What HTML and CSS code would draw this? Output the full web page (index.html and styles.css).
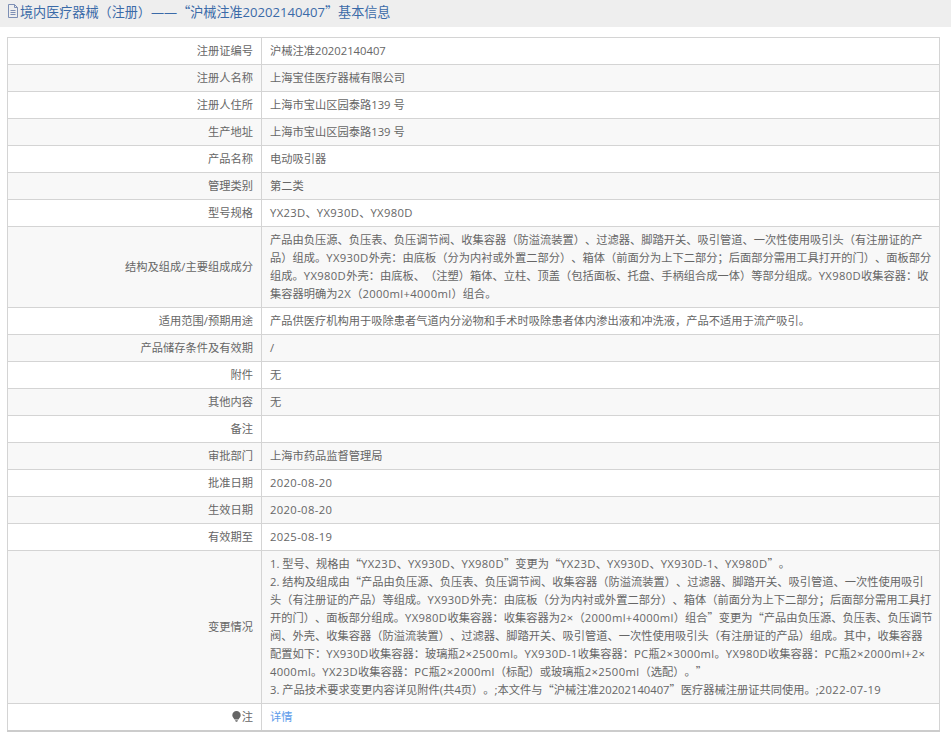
FILE: index.html
```html
<!DOCTYPE html>
<html lang="zh-CN">
<head>
    <meta charset="UTF-8">
    <title>基本信息</title>
    <link rel="stylesheet" href="styles.css">
</head>
<body>
    <div class="title-bar">
        <svg class="doc-icon" width="12" height="14" viewBox="0 0 12 14"><path d="M1.500 .5h6l3 3v10h-9z M7.500 .5v3h3 M3.500 6.500h5 M3.500 8.500h5 M3.500 10.500h5" fill="none" stroke="#7d8fb5"/></svg>
        <span>境内医疗器械（注册）——<span class="q">“</span>沪械注准20202140407<span class="q">”</span>基本信息</span>
    </div>
    <table class="info-table">
        <tr><td class="label">注册证编号</td><td>沪械注准20202140407</td></tr>
        <tr><td class="label">注册人名称</td><td>上海宝佳医疗器械有限公司</td></tr>
        <tr><td class="label">注册人住所</td><td>上海市宝山区园泰路139 号</td></tr>
        <tr><td class="label">生产地址</td><td>上海市宝山区园泰路139 号</td></tr>
        <tr><td class="label">产品名称</td><td>电动吸引器</td></tr>
        <tr><td class="label">管理类别</td><td>第二类</td></tr>
        <tr><td class="label">型号规格</td><td><span class="en">YX23D</span>、<span class="en">YX930D</span>、<span class="en">YX980D</span></td></tr>
        <tr><td class="label">结构及组成/主要组成成分</td><td>产品由负压源、负压表、负压调节阀、收集容器（防溢流装置）、过滤器、脚踏开关、吸引管道、一次性使用吸引头（有注册证的产<br>品）组成。<span class="en">YX930D</span>外壳<span class="p">：</span>由底板（分为内衬或外置二部分）、箱体（前面分为上下二部分<span class="p">；</span>后面部分需用工具打开的门）、面板部分<br>组成。<span class="en">YX980D</span>外壳<span class="p">：</span>由底板、（注塑）箱体、立柱、顶盖（包括面板、托盘、手柄组合成一体）等部分组成。<span class="en">YX980D</span>收集容器<span class="p">：</span>收<br>集容器明确为<span class="en">2X</span>（<span class="en">2000ml+4000ml</span>）组合。</td></tr>
        <tr><td class="label">适用范围/预期用途</td><td>产品供医疗机构用于吸除患者气道内分泌物和手术时吸除患者体内渗出液和冲洗液<span class="p">，</span>产品不适用于流产吸引。</td></tr>
        <tr><td class="label">产品储存条件及有效期</td><td>/</td></tr>
        <tr><td class="label">附件</td><td>无</td></tr>
        <tr><td class="label">其他内容</td><td>无</td></tr>
        <tr><td class="label">备注</td><td></td></tr>
        <tr><td class="label">审批部门</td><td>上海市药品监督管理局</td></tr>
        <tr><td class="label">批准日期</td><td><span class="en">2020-08-20</span></td></tr>
        <tr><td class="label">生效日期</td><td><span class="en">2020-08-20</span></td></tr>
        <tr><td class="label">有效期至</td><td><span class="en">2025-08-19</span></td></tr>
        <tr><td class="label">变更情况</td><td>1. 型号、规格由<span class="q">“</span><span class="en">YX23D</span>、<span class="en">YX930D</span>、<span class="en">YX980D</span><span class="q">”</span>变更为<span class="q">“</span><span class="en">YX23D</span>、<span class="en">YX930D</span>、<span class="en">YX930D-1</span>、<span class="en">YX980D</span><span class="q">”</span>。<br>2. 结构及组成由<span class="q">“</span>产品由负压源、负压表、负压调节阀、收集容器（防溢流装置）、过滤器、脚踏开关、吸引管道、一次性使用吸引<br>头（有注册证的产品）等组成。<span class="en">YX930D</span>外壳<span class="p">：</span>由底板（分为内衬或外置二部分）、箱体（前面分为上下二部分<span class="p">；</span>后面部分需用工具打<br>开的门）、面板部分组成。<span class="en">YX980D</span>收集容器<span class="p">：</span>收集容器为<span class="en">2×</span>（<span class="en">2000ml+4000ml</span>）组合<span class="q">”</span>变更为<span class="q">“</span>产品由负压源、负压表、负压调节<br>阀、外壳、收集容器（防溢流装置）、过滤器、脚踏开关、吸引管道、一次性使用吸引头（有注册证的产品）组成。其中<span class="p">，</span>收集容器<br>配置如下<span class="p">：</span><span class="en">YX930D</span>收集容器<span class="p">：</span>玻璃瓶<span class="en">2×2500ml</span>。<span class="en">YX930D-1</span>收集容器<span class="p">：</span><span class="en">PC</span>瓶<span class="en">2×3000ml</span>。<span class="en">YX980D</span>收集容器<span class="p">：</span><span class="en">PC</span>瓶<span class="en">2×2000ml+2×</span><br><span class="en">4000ml</span>。<span class="en">YX23D</span>收集容器<span class="p">：</span><span class="en">PC</span>瓶<span class="en">2×2000ml</span>（标配）或玻璃瓶<span class="en">2×2500ml</span>（选配）。<span class="q">”</span><br>3. 产品技术要求变更内容详见附件(共4页）。;本文件与<span class="q">“</span>沪械注准20202140407<span class="q">”</span>医疗器械注册证共同使用。;<span class="en">2022-07-19</span></td></tr>
        <tr><td class="label"><svg class="tip-icon" width="9" height="11" viewBox="0 0 9 11"><path d="M4.500 0a4.200 4.200 0 0 1 4.200 4.200c0 2-1.500 2.800-2.200 4.300h-4c-.7-1.500-2.200-2.300-2.200-4.300a4.200 4.200 0 0 1 4.200-4.200zM3 9.300h3l-.8 1.500h-1.400z" fill="#666"/></svg>注</td><td><a href="#" class="detail-link">详情</a></td></tr>
    </table>
</body>
</html>
```

FILE: styles.css
```css
body {
    margin: 0;
    background-color: #fff;
    font-family: "Open Sans", "Noto Sans CJK SC", sans-serif;
    font-size: 11.250px;
    color: #666;
    text-spacing-trim: space-all;
    font-kerning: none;
}
.q {
    font-family: "Noto Sans CJK SC", sans-serif;
    line-height: 1;
}
.p {
    font-family: "Noto Sans CJK TC", sans-serif;
    line-height: 1;
}
.en {
    letter-spacing: .35px;
}
.title-bar {
    display: flex;
    align-items: center;
    box-sizing: border-box;
    height: 27px;
    padding: 0 0 5px 7px;
    background-color: #eee;
    color: #3a6aa8;
    font-size: 13.100px;
    white-space: nowrap;
}
.doc-icon {
    margin-right: 1px;
}
.info-table {
    width: 933px;
    margin: 10px 0 0 7px;
    table-layout: fixed;
    border-collapse: collapse;
    border: 1px solid #ccc;
    border-bottom-width: 2px;
}
.info-table td {
    padding: 4px 8px;
    border: 1px solid #d4d4d4;
    line-height: 18px;
    height: 18px;
    white-space: nowrap;
}
.info-table tr:nth-child(even) {
    background-color: #f8f8f8;
}
.info-table .label {
    width: 237px;
    text-align: right;
}
.tip-icon {
    vertical-align: -1px;
    margin-right: 1px;
}
.detail-link {
    color: #5b9bea;
    text-decoration: none;
}
```
